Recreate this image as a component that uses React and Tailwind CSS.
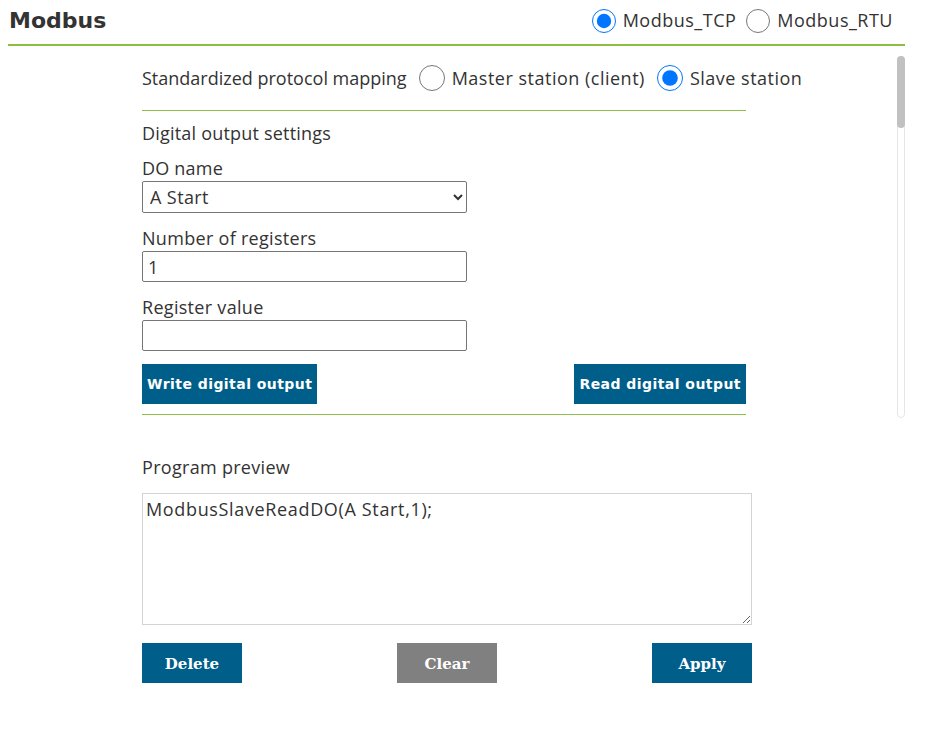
import React from "react";

const body = { fontFamily: '"Open Sans", "Noto Sans", sans-serif' };

function Radio({ checked, label, name, size }) {
  return (
    <label className="flex items-center gap-[7px] cursor-pointer whitespace-nowrap">
      <input
        type="radio"
        name={name}
        defaultChecked={checked}
        className={
          size === "lg"
            ? "w-[26px] h-[26px] m-0 accent-[#0075ff]"
            : "w-[24px] h-[24px] m-0 accent-[#0075ff]"
        }
      />
      <span className="tracking-[0.5px]">{label}</span>
    </label>
  );
}

export default function App() {
  return (
    <div className="w-[926px] h-[734px] bg-white text-[#333] overflow-hidden" style={body}>
      <div className="mx-[8px] w-[897px]">
        <div className="h-[46px] pb-[3px] flex items-center justify-between border-b-2 border-[#8cbf3f]">
          <div
            className="pl-[1px] text-[22px] font-bold text-[#333]"
            style={{ fontFamily: '"DejaVu Sans", Verdana, sans-serif' }}
          >
            Modbus
          </div>
          <div className="flex items-center gap-[10px] pr-[12px] text-[18px]">
            <Radio name="proto" checked label="Modbus_TCP" />
            <Radio name="proto" label="Modbus_RTU" />
          </div>
        </div>

        <div className="mt-[10px] h-[362px] flex">
          <div className="flex-1 overflow-hidden pl-[134px] text-[18px]">
            <div className="h-[44px] flex items-center gap-[12px] whitespace-nowrap">
              <span>Standardized protocol mapping</span>
              <Radio name="role" size="lg" label="Master station (client)" />
              <Radio name="role" size="lg" checked label="Slave station" />
            </div>
            <div className="mt-[10px] w-[604px] h-px bg-[#8fbc4a]" />
            <div className="mt-[10px] leading-[24px] tracking-[0.2px]">Digital output settings</div>
            <div className="mt-[11px] leading-[24px] tracking-[0.2px]">DO name</div>
            <select className="mt-[1px] w-[325px] h-[32px] border border-[#767676] rounded-[2px] px-[3px] text-[18px] tracking-[0.4px] bg-white">
              <option>A Start</option>
            </select>
            <div className="mt-[13px] leading-[24px] tracking-[0.3px]">Number of registers</div>
            <input
              defaultValue="1"
              className="block mt-[1px] w-[325px] h-[31px] border border-[#767676] rounded-[2px] px-[5px] text-[18px]"
            />
            <div className="mt-[13px] leading-[24px] tracking-[0.3px]">Register value</div>
            <input className="block mt-[1px] w-[325px] h-[31px] border border-[#767676] rounded-[2px] px-[5px] text-[18px]" />
            <div
              className="mt-[13px] flex justify-between w-[604px]"
              style={{ fontFamily: '"DejaVu Sans", Verdana, sans-serif' }}
            >
              <button className="h-[40px] px-[5px] bg-[#005e8a] text-white text-[14px] font-bold tracking-[0.45px]">
                Write digital output
              </button>
              <button className="h-[40px] px-[5px] bg-[#005e8a] text-white text-[14px] font-bold tracking-[0.45px]">
                Read digital output
              </button>
            </div>
            <div className="mt-[10px] w-[604px] h-px bg-[#8fbc4a]" />
          </div>
          <div className="w-[8px] h-full rounded-[4px] border border-[#e6e6e6] bg-white flex flex-col">
            <div className="h-[72px] -m-px rounded-[4px] bg-[#c1c1c1]" />
          </div>
        </div>

        <div className="pl-[134px] text-[18px]">
          <div className="mt-[37px] leading-[24px] tracking-[0.3px]">Program preview</div>
          <textarea
            defaultValue="ModbusSlaveReadDO(A Start,1);"
            className="block mt-[14px] w-[610px] h-[132px] border border-[#d4d4d4] px-[3px] py-[2px] text-[18px] tracking-[0.65px] text-[#333]"
          />
          <div
            className="mt-[18px] w-[610px] flex justify-between text-[15px] font-bold text-white"
            style={{ fontFamily: '"DejaVu Serif", "Liberation Serif", serif' }}
          >
            <button className="w-[100px] h-[40px] pt-[3px] bg-[#005e8a]">Delete</button>
            <button className="w-[100px] h-[40px] pt-[3px] bg-[#808080]">Clear</button>
            <button className="w-[100px] h-[40px] pt-[3px] bg-[#005e8a]">Apply</button>
          </div>
        </div>
      </div>
    </div>
  );
}
